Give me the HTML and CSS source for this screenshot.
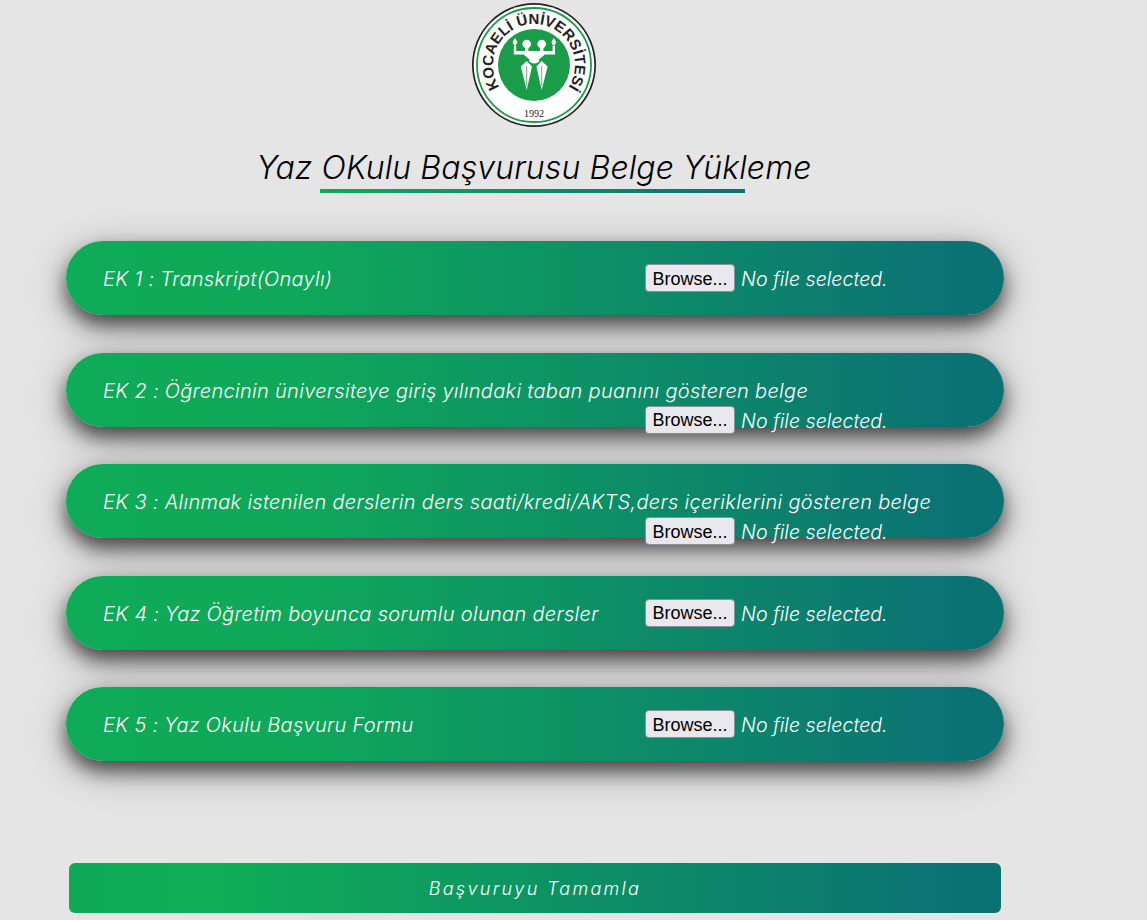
FILE: index.html
```html
<!DOCTYPE html>
<html lang="en">
    <head>
        <meta charset="UTF-8" />
        <meta name="viewport" content="width=device-width, initial-scale=1" />
        <title>Yaz Okulu Başvurusu Belge Yükleme</title>
        <link rel="stylesheet" href="styles.css">
    </head>
    <body>
        <main class="page">
            <div class="logo">
                <svg width="126" height="130" viewBox="0 0 126 130">
                    <defs>
                        <path id="logo-arc" d="M 63 106 A 41 41 0 0 1 63 24 A 41 41 0 0 1 63 106" />
                    </defs>
                    <circle cx="63" cy="65" r="62" fill="#222" />
                    <circle cx="63" cy="65" r="60.3" fill="#fff" />
                    <circle cx="63" cy="65" r="57" fill="none" stroke="#1a9c48" stroke-width="1.8" />
                    <circle cx="63" cy="65" r="36" fill="#1a9c48" />
                    <text class="logo-name" text-anchor="middle"><textPath href="#logo-arc" startOffset="50%">KOCAELİ ÜNİVERSİTESİ</textPath></text>
                    <text class="logo-year" x="63" y="117" text-anchor="middle">1992</text>
                    <g fill="#fff">
                        <circle cx="55.7" cy="44" r="4.3" />
                        <circle cx="70.7" cy="44" r="4.3" />
                        <ellipse cx="63.2" cy="60.5" rx="5" ry="3" />
                        <path d="M 42.8 46 H 45.2 V 51 H 54 V 46 H 57.4 V 51 H 69 V 46 H 72.4 V 51 H 81.6 V 46 H 84 V 54.5 H 74 L 66 61 H 60.5 L 52.5 54.5 H 42.8 Z" />
                        <path d="M 44 38 L 46.4 42 L 44.9 45.5 H 43.1 L 41.6 42 Z" />
                        <path d="M 82.8 38 L 85.2 42 L 83.7 45.5 H 81.9 L 80.4 42 Z" />
                        <path d="M 55.7 61 L 61 66.5 L 55.7 90 L 49.8 66.5 Z" />
                        <path d="M 70.7 61 L 76.6 66.5 L 70.7 90 L 65.4 66.5 Z" />
                    </g>
                    <path d="M 55.7 66 V 86 M 70.7 66 V 86" stroke="#1a9c48" stroke-width="0.7" fill="none" />
                </svg>
            </div>

            <h1 class="title">Yaz OKulu Başvurusu Belge Yükleme</h1>

            <form class="upload-form">
                <div class="upload-row">
                    <label class="upload-label">EK 1 : Transkript(Onaylı)</label>
                    <div class="file-field">
                        <button type="button" class="browse-btn">Browse...</button>
                        <span class="file-name">No file selected.</span>
                    </div>
                </div>
                <div class="upload-row upload-row-long">
                    <label class="upload-label">EK 2 : Öğrencinin üniversiteye giriş yılındaki taban puanını gösteren belge</label>
                    <div class="file-field">
                        <button type="button" class="browse-btn">Browse...</button>
                        <span class="file-name">No file selected.</span>
                    </div>
                </div>
                <div class="upload-row upload-row-long">
                    <label class="upload-label">EK 3 : Alınmak istenilen derslerin ders saati/kredi/AKTS,ders içeriklerini gösteren belge</label>
                    <div class="file-field">
                        <button type="button" class="browse-btn">Browse...</button>
                        <span class="file-name">No file selected.</span>
                    </div>
                </div>
                <div class="upload-row">
                    <label class="upload-label">EK 4 : Yaz Öğretim boyunca sorumlu olunan dersler</label>
                    <div class="file-field">
                        <button type="button" class="browse-btn">Browse...</button>
                        <span class="file-name">No file selected.</span>
                    </div>
                </div>
                <div class="upload-row">
                    <label class="upload-label">EK 5 : Yaz Okulu Başvuru Formu</label>
                    <div class="file-field">
                        <button type="button" class="browse-btn">Browse...</button>
                        <span class="file-name">No file selected.</span>
                    </div>
                </div>

                <button type="submit" class="submit-btn">Başvuruyu Tamamla</button>
            </form>
        </main>
    </body>
</html>
```

FILE: styles.css
```css
* {
  box-sizing: border-box;
}
html, body {
  height: 920px;
  overflow: hidden;
}
body {
  margin: 0;
  background: #e5e5e5;
  font-family: 'Inter', 'Liberation Sans', sans-serif;
  color: #000;
}
.page {
  width: 1070px;
  display: flex;
  flex-direction: column;
  align-items: center;
}
.logo {
  height: 130px;
  margin-right: 2px;
  line-height: 0;
}
.logo-name {
  font-family: 'Liberation Sans', sans-serif;
  font-weight: bold;
  font-size: 15px;
  fill: #222;
}
.logo-year {
  font-family: 'Liberation Serif', serif;
  font-size: 10px;
  fill: #222;
}
.title {
  position: relative;
  margin: 16px 2px 48px 0;
  height: 47px;
  font-size: 32px;
  line-height: 44px;
  font-weight: 300;
  font-style: italic;
  letter-spacing: 0.12px;
  white-space: nowrap;
}
.title::after {
  content: "";
  position: absolute;
  left: 63px;
  bottom: 0;
  width: 425px;
  height: 4px;
  background: linear-gradient(90deg, #0fa958, #0c7076);
}
.upload-form {
  width: 938px;
  display: flex;
  flex-direction: column;
  gap: 37.6px;
}
.upload-row {
  height: 74px;
  padding-left: 37px;
  display: flex;
  align-items: center;
  border-radius: 37px;
  color: #fff;
  background: linear-gradient(90deg, #0fab57 0%, #0fa85a 25%, #0b7274 95%);
  box-shadow: 0 10px 20px rgba(0, 0, 0, 0.65), 0 10px 50px rgba(0, 0, 0, 0.22);
}
.upload-label {
  width: 542px;
  flex-shrink: 0;
  padding-top: 2px;
  font-size: 20px;
  font-weight: 300;
  font-style: italic;
  letter-spacing: 0.3px;
  white-space: nowrap;
}
.file-field {
  display: flex;
  align-items: center;
  gap: 6px;
}
.file-name {
  padding-top: 2px;
  font-size: 19.6px;
  font-weight: 300;
  font-style: italic;
}
.upload-row-long .file-field {
  margin-top: 60px;
}
.browse-btn {
  width: 90px;
  height: 28px;
  padding: 2px 0 0;
  border: 1px solid #8f8f9d;
  border-radius: 4px;
  background: #e9e9ed;
  color: #000;
  font-family: 'Liberation Sans', sans-serif;
  font-size: 18px;
}
.submit-btn {
  width: 932px;
  height: 50px;
  margin: 64px 0 0 3px;
  padding-top: 2px;
  border: none;
  border-radius: 6px;
  color: #fff;
  background: linear-gradient(90deg, #0fa958 0%, #0fae56 15%, #0b7274 95%);
  font-family: 'Inter', sans-serif;
  font-size: 18px;
  font-weight: 300;
  font-style: italic;
  letter-spacing: 2.3px;
}
```
